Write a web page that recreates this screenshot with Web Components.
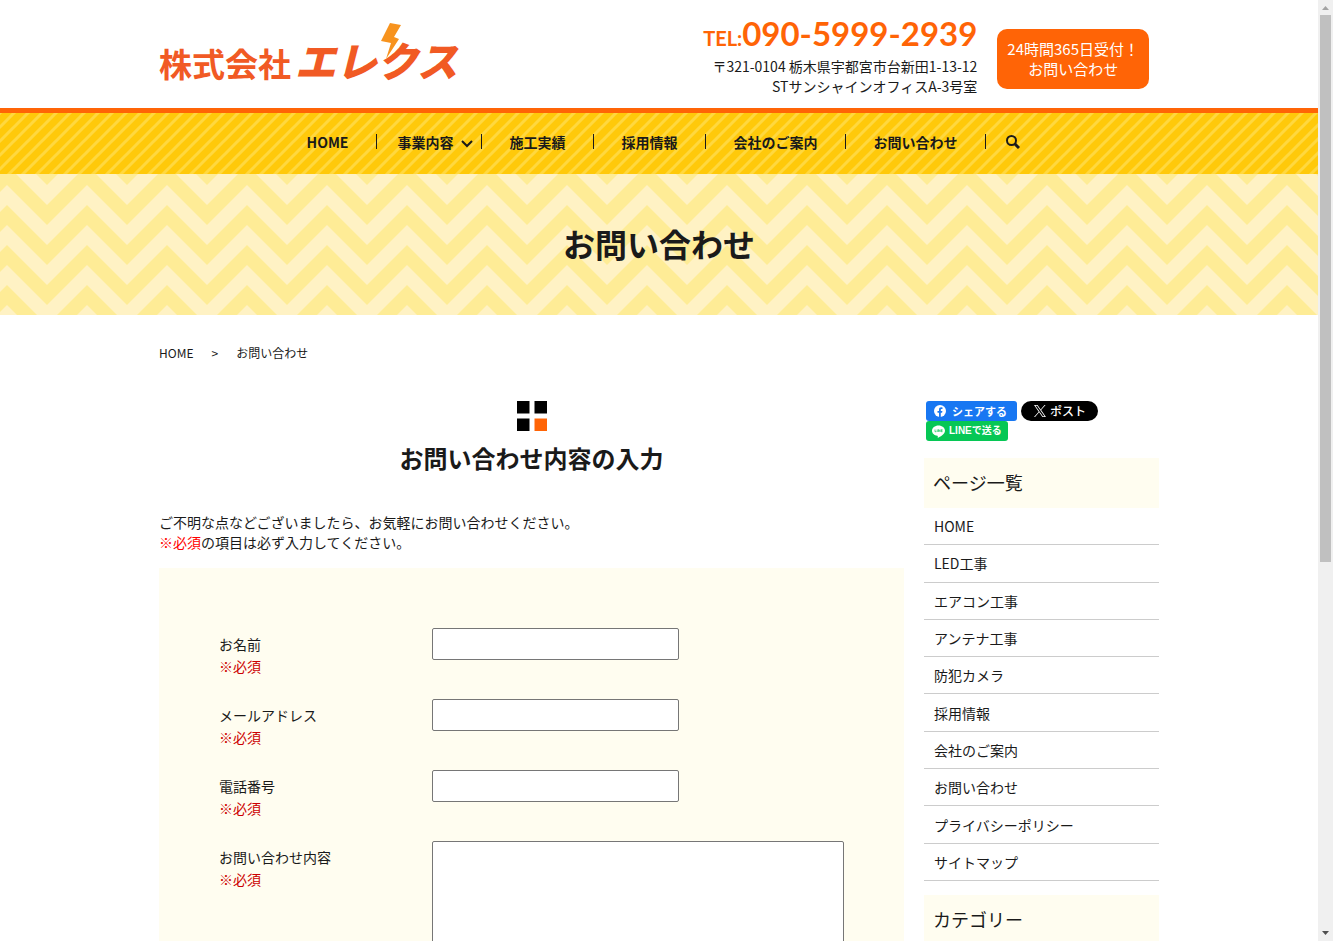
<!DOCTYPE html>
<html lang="ja">
<head>
<meta charset="utf-8">
<title>お問い合わせ | 株式会社エレクス</title>
<style>
    body {
        margin: 0;
        height: 100vh;
        overflow: hidden;
        background: #fff;
        color: #1a1a1a;
        font-family: "Noto Sans CJK JP", sans-serif;
        font-size: 14px;
        line-height: 20px;
    }
</style>
</head>
<body>
<site-page>
    <site-header slot="header"></site-header>
    <site-nav slot="header"></site-nav>
    <page-title slot="header">お問い合わせ</page-title>
    <bread-crumb>お問い合わせ</bread-crumb>
    <page-columns>
        <contact-form></contact-form>
        <share-buttons slot="side"></share-buttons>
        <side-menu slot="side" items="HOME,LED工事,エアコン工事,アンテナ工事,防犯カメラ,採用情報,会社のご案内,お問い合わせ,プライバシーポリシー,サイトマップ">ページ一覧</side-menu>
        <side-menu slot="side">カテゴリー</side-menu>
    </page-columns>
</site-page>

<script>
class SitePage extends HTMLElement{
    constructor(){
        super();
        this.attachShadow({mode: 'open'});
        this.shadowRoot.innerHTML = `
            <style>
                :host {
                    display: grid;
                    grid-template-columns: minmax(0, 1fr) 15px;
                    height: 100vh;
                }

                #view {
                    overflow: hidden;
                }

                main {
                    max-width: 1000px;
                    margin: 0 auto;
                }
            </style>
            <div id="view">
                <slot name="header"></slot>
                <main><slot></slot></main>
            </div>
            <scroll-track></scroll-track>
        `
    }
}

class ScrollTrack extends HTMLElement{
    constructor(){
        super();
        this.attachShadow({mode: 'open'});
        this.shadowRoot.innerHTML = `
            <style>
                :host {
                    display: flex;
                    flex-direction: column;
                    align-items: center;
                    background: #f0f0f0;
                }

                svg {
                    display: block;
                    flex: none;
                }

                #rail {
                    flex: 1;
                    width: 11px;
                }

                #thumb {
                    height: 60%;
                    background: #c0c0c0;
                }
            </style>
            <svg width="15" height="15"><path d="M4 10h7L7.500 6z" fill="#a3a3a3"/></svg>
            <div id="rail"><div id="thumb"></div></div>
            <svg width="15" height="15"><path d="M4 5h7L7.500 9z" fill="#505050"/></svg>
        `
    }
}

class SiteHeader extends HTMLElement{
    constructor(){
        super();
        this.attachShadow({mode: 'open'});
        this.shadowRoot.innerHTML = `
            <style>
                :host {
                    display: block;
                    border-bottom: 5px solid #ff6406;
                }

                a {
                    color: inherit;
                    text-decoration: none;
                }

                header {
                    display: flex;
                    align-items: center;
                    max-width: 1000px;
                    height: 108px;
                    margin: 0 auto;
                }

                #logo {
                    position: relative;
                    display: flex;
                    align-items: baseline;
                    gap: 4px;
                    margin-right: auto;
                    padding-top: 14px;
                    color: #f15a24;
                    font-size: 33px;
                    line-height: 60px;
                    font-weight: 700;
                }

                #logo em {
                    font-size: 41px;
                    font-weight: 900;
                }

                #logo svg {
                    position: absolute;
                    left: 222px;
                    top: 8px;
                }

                #contact {
                    text-align: right;
                    margin: 0 20px 2px 0;
                }

                #tel {
                    display: block;
                    color: #ff6406;
                    font: 700 33px/36px Lato, sans-serif;
                    padding-top: 4px;
                }

                #tel small {
                    font-size: 20px;
                }

                address {
                    font-style: normal;
                }

                #cta {
                    margin: 10px 10px 0 0;
                    padding: 10px;
                    border-radius: 10px;
                    background: #ff6406;
                    color: #fff;
                    font-size: 15px;
                    text-align: center;
                }
            </style>
            <header>
                <a id="logo" href="#">
                    <span>株式会社</span><em>エレクス</em>
                    <svg width="20" height="36" viewBox="0 0 20 36"><path d="M9 0l11 2-7 12 5 2L5 36l5-16-10-2z" fill="#f7931e"/></svg>
                </a>
                <div id="contact">
                    <a id="tel" href="tel:09059992939"><small>TEL:</small>090-5999-2939</a>
                    <address>〒321-0104 栃木県宇都宮市台新田1-13-12<br>STサンシャインオフィスA-3号室</address>
                </div>
                <a id="cta" href="#">24時間365日受付！<br>お問い合わせ</a>
            </header>
        `
    }
}

class SiteNav extends HTMLElement{
    constructor(){
        super();
        this.attachShadow({mode: 'open'});
        this.shadowRoot.innerHTML = `
            <style>
                :host {
                    display: block;
                    background: #ffc90a url("data:image/svg+xml,%3Csvg xmlns='http://www.w3.org/2000/svg' width='14' height='14'%3E%3Cpath d='M-4 18L18-4M-4 4L4-4M10 18L18 10' stroke='%23ffd83f' stroke-width='3'/%3E%3C/svg%3E");
                }

                ul {
                    display: flex;
                    justify-content: center;
                    align-items: center;
                    margin: 0;
                    padding: 0 0 4px 2px;
                    height: 57px;
                    list-style: none;
                    font-weight: 700;
                }

                li {
                    display: flex;
                    align-items: center;
                    height: 15px;
                    padding: 0 28px 0 27px;
                    border-right: 1px solid #1a1a1a;
                }

                li.sub {
                    gap: 8px;
                    padding: 0 8px 0 20px;
                }

                li.search {
                    padding: 0 20px;
                    border: 0;
                }

                a {
                    color: inherit;
                    text-decoration: none;
                }

                button {
                    display: block;
                    padding: 0;
                    border: 0;
                    background: none;
                }

                svg {
                    display: block;
                    fill: none;
                    stroke: #1a1a1a;
                    stroke-width: 2;
                }
            </style>
            <nav>
                <ul>
                    <li><a href="#">HOME</a></li>
                    <li class="sub"><a href="#">事業内容</a><svg width="12" height="12"><path d="M1 5l5 5 5-5"/></svg></li>
                    <li><a href="#">施工実績</a></li>
                    <li><a href="#">採用情報</a></li>
                    <li><a href="#">会社のご案内</a></li>
                    <li><a href="#">お問い合わせ</a></li>
                    <li class="search"><button aria-label="検索"><svg width="14" height="14"><circle cx="5.500" cy="5.500" r="4.500"/><path d="M8.500 8.500l4.500 4.500" stroke-width="3"/></svg></button></li>
                </ul>
            </nav>
        `
    }
}

class PageTitle extends HTMLElement{
    constructor(){
        super();
        this.attachShadow({mode: 'open'});
        this.shadowRoot.innerHTML = `
            <style>
                :host {
                    display: block;
                    padding: 45px 0 48px;
                    background: #feec96 url("data:image/svg+xml,%3Csvg xmlns='http://www.w3.org/2000/svg' width='80' height='40'%3E%3Cpath d='M0 40L40 0L80 40V60L40 20L0 60zM0 0L40-40L80 0V20L40-20L0 20z' fill='%23fff2c4'/%3E%3C/svg%3E") 47px 11px;
                }

                h1 {
                    margin: 0;
                    font-size: 32px;
                    line-height: 48px;
                    text-align: center;
                }
            </style>
            <h1><slot></slot></h1>
        `
    }
}

class BreadCrumb extends HTMLElement{
    constructor(){
        super();
        this.attachShadow({mode: 'open'});
        this.shadowRoot.innerHTML = `
            <style>
                :host {
                    display: flex;
                    gap: 18px;
                    padding: 28px 0 38px;
                    font-size: 12px;
                }

                a {
                    color: inherit;
                    text-decoration: none;
                }
            </style>
            <a href="#">HOME</a>
            <span>&gt;</span>
            <span><slot></slot></span>
        `
    }
}

class PageColumns extends HTMLElement{
    constructor(){
        super();
        this.attachShadow({mode: 'open'});
        this.shadowRoot.innerHTML = `
            <style>
                :host {
                    display: grid;
                    grid-template-columns: minmax(0, 1fr) 235px;
                    gap: 20px;
                }
            </style>
            <div><slot></slot></div>
            <aside><slot name="side"></slot></aside>
        `
    }
}

class ContactForm extends HTMLElement{
    constructor(){
        super();
        this.attachShadow({mode: 'open'});
        this.shadowRoot.innerHTML = `
            <style>
                :host {
                    display: block;
                }

                #mark {
                    display: block;
                    margin: 0 auto 9px;
                }

                h2 {
                    margin: 0 0 36px;
                    font-size: 24px;
                    line-height: 36px;
                    text-align: center;
                }

                p {
                    margin: 0 0 16px;
                }

                p span {
                    color: #f00;
                }

                form {
                    padding: 60px;
                    background: #fffdf0;
                }

                .row {
                    display: grid;
                    grid-template-columns: 34% 66%;
                    align-items: start;
                    min-height: 71px;
                }

                label {
                    padding-top: 5px;
                    line-height: 22px;
                }

                label span {
                    display: block;
                    color: #c00;
                }

                input, textarea {
                    box-sizing: border-box;
                    border: 1px solid #767676;
                    border-radius: 2px;
                    background: #fff;
                    font: inherit;
                }

                input {
                    width: 60%;
                    height: 32px;
                }

                textarea {
                    width: 100%;
                    height: 200px;
                    resize: none;
                }
            </style>
            <svg id="mark" width="30" height="30"><path d="M0 0h12.500v12.500H0zM17.500 0H30v12.500H17.500zM0 17.500h12.500V30H0z"/><path d="M17.500 17.500H30V30H17.500z" fill="#ff6406"/></svg>
            <h2>お問い合わせ内容の入力</h2>
            <p>ご不明な点などございましたら、お気軽にお問い合わせください。<br><span>※必須</span>の項目は必ず入力してください。</p>
            <form>
                <div class="row"><label for="name">お名前<span>※必須</span></label><input id="name" type="text"></div>
                <div class="row"><label for="mail">メールアドレス<span>※必須</span></label><input id="mail" type="email"></div>
                <div class="row"><label for="phone">電話番号<span>※必須</span></label><input id="phone" type="tel"></div>
                <div class="row"><label for="message">お問い合わせ内容<span>※必須</span></label><textarea id="message"></textarea></div>
            </form>
        `
    }
}

class ShareButtons extends HTMLElement{
    constructor(){
        super();
        this.attachShadow({mode: 'open'});
        this.shadowRoot.innerHTML = `
            <style>
                :host {
                    display: flex;
                    flex-wrap: wrap;
                    column-gap: 4px;
                    padding: 0 2px 17px;
                }

                a {
                    display: flex;
                    align-items: center;
                    box-sizing: border-box;
                    height: 20px;
                    border-radius: 3px;
                    color: #fff;
                    font-size: 11px;
                    line-height: 18px;
                    font-weight: 700;
                    text-decoration: none;
                }

                #fb {
                    gap: 6px;
                    padding: 0 10px 0 8px;
                    background: #1877f2;
                }

                #x {
                    gap: 4px;
                    padding: 0 12px 0 13px;
                    border-radius: 10px;
                    background: #000;
                    font-size: 12px;
                    font-weight: 500;
                }

                #line {
                    gap: 4px;
                    padding: 0 6px;
                    background: #06c755;
                    font-family: "Liberation Sans", "Noto Sans CJK JP", sans-serif;
                    font-size: 10px;
                }
            </style>
            <a id="fb" href="#"><svg width="12" height="12" viewBox="0 0 12 12"><circle cx="6" cy="6" r="6" fill="#fff"/><path d="M5 12V7.800H3.500V6H5V4.700C5 3.100 5.900 2.300 7.300 2.300l1.200.1v1.500h-.8c-.7 0-.9.400-.9.900V6h1.600l-.3 1.800H6.800V12z" fill="#1877f2"/></svg>シェアする</a>
            <a id="x" href="#"><svg width="12" height="12" viewBox="0 0 24 24" fill="#fff"><path d="M14.258 10.152L23.176 0h-2.113l-7.747 8.813L7.133 0H0l9.352 13.328L0 23.973h2.113l8.176-9.309 6.531 9.309h7.133zm-2.895 3.293l-.949-1.328L2.875 1.560h3.246l6.086 8.523.945 1.328 7.910 11.078h-3.246z"/></svg>ポスト</a>
            <a id="line" href="#"><svg width="13" height="13" viewBox="0 0 13 13"><path d="M6.500.5C2.900.5 0 2.800 0 5.700c0 2.600 2.300 4.700 5.400 5.100.6.1.4.9.3 2C8 11.800 13 9.400 13 5.700 13 2.800 10.100.5 6.500.5z" fill="#fff"/><path d="M3 4.500v2.200h1.300M5.200 4.500v2.500M6.400 7V4.500l1.600 2.200V4.500M10.500 4.700H9.200v2h1.300M9.200 5.700h1.200" fill="none" stroke="#06c755" stroke-width=".7"/></svg>LINEで送る</a>
        `
    }
}

class SideMenu extends HTMLElement{
    constructor(){
        super();
        this.attachShadow({mode: 'open'});
        const items = (this.getAttribute('items') || '').split(',').filter(Boolean);
        this.shadowRoot.innerHTML = `
            <style>
                :host {
                    display: block;
                    margin-bottom: 14px;
                }

                h3 {
                    margin: 0;
                    padding: 11px 9px 13px;
                    background: #fffdf0;
                    font-size: 18px;
                    line-height: 26px;
                    font-weight: 400;
                }

                /* rows share the height of the list evenly */
                ul {
                    display: grid;
                    grid-auto-rows: 1fr;
                    min-height: 373px;
                    margin: 0;
                    padding: 0;
                    list-style: none;
                }

                li {
                    display: flex;
                    align-items: center;
                    padding: 0 10px;
                    border-bottom: 1px solid #ccc;
                }

                a {
                    color: inherit;
                    text-decoration: none;
                }
            </style>
            <h3><slot></slot></h3>
            ${items.length ? `<ul>${items.map(item => `<li><a href="#">${item}</a></li>`).join('')}</ul>` : ''}
        `
    }
}

customElements.define("site-page", SitePage);
customElements.define("scroll-track", ScrollTrack);
customElements.define("site-header", SiteHeader);
customElements.define("site-nav", SiteNav);
customElements.define("page-title", PageTitle);
customElements.define("bread-crumb", BreadCrumb);
customElements.define("page-columns", PageColumns);
customElements.define("contact-form", ContactForm);
customElements.define("share-buttons", ShareButtons);
customElements.define("side-menu", SideMenu);
</script>
</body>
</html>
